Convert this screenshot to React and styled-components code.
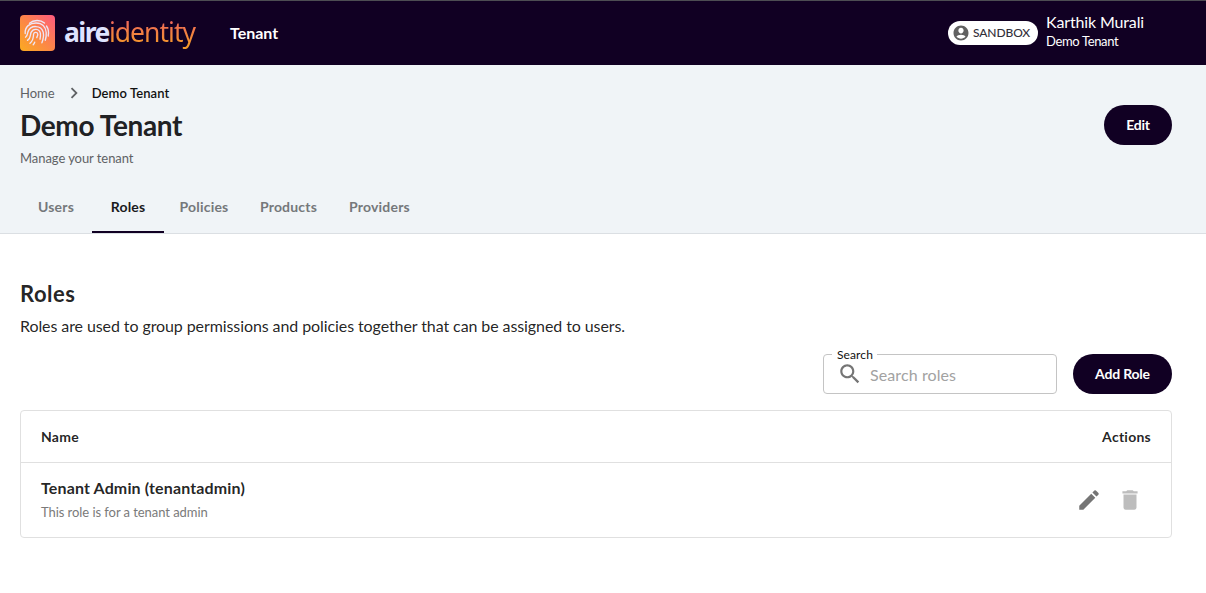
import React from "react";
import styled, { createGlobalStyle } from "styled-components";

const ink = "#110023";

const Global = createGlobalStyle`
  *, *::before, *::after { box-sizing: border-box; }
  body { margin: 0; background: #fff; font-family: Lato, "Liberation Sans", sans-serif; color: rgba(0, 0, 0, 0.87); }
  h1, h2, p { margin: 0; }
  button { font-family: inherit; border: 0; padding: 0; background: none; cursor: pointer; }
`;

const TopBar = styled.header`
  display: flex;
  align-items: center;
  height: 65px;
  padding: 0 62px 0 20px;
  background: ${ink};
  border-top: 1px solid #4d4d53;
  color: #fff;
`;
const Brand = styled.div`
  display: flex;
  align-items: center;
  width: 210px;
`;
const Wordmark = styled.div`
  display: flex;
  margin: -3px 0 0 9px;
  font: 700 26.5px/36px "Noto Sans", "Open Sans", sans-serif;
  letter-spacing: -1.5px;
  color: #dfe3ff;
`;
const WordmarkLight = styled.span`
  font-weight: 400;
  letter-spacing: -0.98px;
  padding-right: 2px;
  background: linear-gradient(to top, #f4982a 15%, #f0645e 85%);
  background-clip: text;
  color: transparent;
`;
const NavLink = styled.a`
  font-size: 16px;
  font-weight: 700;
  line-height: 20px;
`;
const Account = styled.div`
  display: flex;
  align-items: center;
  gap: 8px;
  margin-left: auto;
`;
const Chip = styled.span`
  display: flex;
  align-items: center;
  gap: 3px;
  width: 90px;
  height: 24px;
  padding-left: 4px;
  border-radius: 12px;
  background: #fff;
  color: #33303a;
  font-size: 12px;
  font-weight: 500;
  line-height: 22px;
  letter-spacing: -0.1px;
`;
const Person = styled.div`
  width: 98px;
  margin-top: -4px;
  white-space: nowrap;
`;
const PersonName = styled.div`
  font-size: 16px;
  line-height: 20px;
  letter-spacing: -0.14px;
`;
const PersonTenant = styled.div`
  font-size: 13px;
  line-height: 18px;
  letter-spacing: -0.35px;
`;

const PageHead = styled.section`
  height: 169px;
  padding: 18px 34px 0 20px;
  background: #f0f4f7;
  border-bottom: 1px solid #dbdfe3;
`;
const Crumbs = styled.nav`
  display: flex;
  align-items: center;
  height: 20px;
  font-size: 13px;
  color: #5f6265;
`;
const Current = styled.span`
  color: #111;
  font-weight: 600;
  letter-spacing: 0.1px;
`;
const HeadRow = styled.div`
  display: flex;
  justify-content: space-between;
  height: 78px;
`;
const Title = styled.h1`
  margin-top: 4px;
  font-size: 28px;
  font-weight: 700;
  line-height: 36px;
  color: #202124;
  letter-spacing: -0.35px;
`;
const Subtitle = styled.p`
  margin-top: 5px;
  font-size: 13px;
  line-height: 20px;
  letter-spacing: -0.06px;
  color: #5f6265;
`;
const PillButton = styled.button`
  width: ${(p) => p.$width}px;
  height: 40px;
  margin-top: ${(p) => p.$top || 0}px;
  padding-bottom: 2px;
  border-radius: 20px;
  background: ${ink};
  color: #fff;
  font-size: 14px;
  font-weight: 700;
  letter-spacing: -0.2px;
`;
const Tabs = styled.div`
  display: flex;
`;
const Tab = styled.button`
  height: 52px;
  width: ${(p) => p.$width}px;
  font-size: 14px;
  font-weight: 700;
  letter-spacing: 0.2px;
  color: ${(p) => (p.$active ? "#1a1a1c" : "#75787b")};
  border-bottom: 2px solid ${(p) => (p.$active ? ink : "transparent")};
`;

const Main = styled.main`
  padding: 46px 34px 0 20px;
`;
const SectionTitle = styled.h2`
  font-size: 22px;
  font-weight: 700;
  line-height: 28px;
  letter-spacing: 0.5px;
`;
const Lead = styled.p`
  margin: 7px 0 17px;
  font-size: 16px;
  line-height: 22px;
  letter-spacing: -0.09px;
`;
const Toolbar = styled.div`
  display: flex;
  justify-content: flex-end;
  gap: 16px;
  margin-bottom: 16px;
`;
const SearchField = styled.label`
  position: relative;
  display: flex;
  align-items: center;
  width: 234px;
  height: 40px;
  padding-left: 13px;
  border: 1px solid #c4c4c4;
  border-radius: 4px;
`;
const SearchLabel = styled.span`
  position: absolute;
  top: -8px;
  left: 8px;
  padding: 0 4px 0 5px;
  background: #fff;
  color: #111;
  font-size: 12px;
  line-height: 15px;
  letter-spacing: 0.1px;
`;
const SearchInput = styled.input`
  width: 170px;
  margin-left: 7px;
  padding: 1px 0 0;
  border: 0;
  outline: 0;
  font: 400 16px/22px Lato, sans-serif;
  letter-spacing: 0.1px;
  &::placeholder { color: #a2a2a2; opacity: 1; }
`;
const Table = styled.div`
  border: 1px solid #e0e0e0;
  border-radius: 4px;
`;
const HeaderRow = styled.div`
  display: flex;
  align-items: center;
  justify-content: space-between;
  height: 52px;
  padding: 0 20px 1px;
  border-bottom: 1px solid #e0e0e0;
  font-size: 14px;
  font-weight: 700;
  letter-spacing: 0.25px;
`;
const Row = styled.div`
  display: flex;
  align-items: center;
  justify-content: space-between;
  height: 74px;
  padding: 0 28px 0 20px;
`;
const RoleText = styled.div`
  margin-top: -2px;
`;
const RoleName = styled.div`
  font-size: 16px;
  font-weight: 700;
  line-height: 24px;
  letter-spacing: 0.14px;
`;
const RoleNote = styled.div`
  margin-top: 2px;
  font-size: 13px;
  line-height: 20px;
  letter-spacing: -0.06px;
  color: #7a7a7a;
`;
const Actions = styled.div`
  display: flex;
  gap: 15px;
`;
const Glyph = styled.svg`
  display: block;
  flex: none;
  fill: ${(p) => p.$color};
  margin: ${(p) => p.$margin || 0};
`;

const paths = {
  account: "M12 2C6.48 2 2 6.48 2 12s4.48 10 10 10 10-4.48 10-10S17.52 2 12 2zm0 3c1.93 0 3.5 1.57 3.5 3.7S13.93 12.500 12 12.500 8.500 10.900 8.500 8.700 10.070 5 12 5zm0 14.500c-2.300 0-4.400-.9-6-2.400.1-1.700 3.800-2.900 6-2.900s5.900 1.200 6 2.900c-1.600 1.500-3.700 2.400-6 2.400z",
  next: "M10 6 8.590 7.410 13.170 12l-4.580 4.590L10 18l6-6z",
  search: "M15.500 14h-.79l-.28-.27C15.410 12.590 16 11.110 16 9.500 16 5.910 13.090 3 9.500 3S3 5.910 3 9.500 5.910 16 9.500 16c1.610 0 3.090-.59 4.230-1.570l.27.28v.79l5 4.990L20.490 19l-4.990-5zm-6 0C7.010 14 5 11.990 5 9.500S7.010 5 9.500 5 14 7.010 14 9.500 11.990 14 9.500 14z",
  edit: "M3 17.250V21h3.750L17.810 9.940l-3.750-3.750L3 17.250zM20.710 7.040c.39-.39.39-1.020 0-1.410l-2.340-2.340a.9959.9959 0 0 0-1.410 0l-1.830 1.830 3.750 3.750 1.830-1.830z",
  trash: "M6 19c0 1.100.9 2 2 2h8c1.100 0 2-.9 2-2V7H6v12zM19 4h-3.500l-1-1h-5l-1 1H5v2h14V4z",
};

function Icon({ name, size = 24, color, margin }) {
  return (
    <Glyph viewBox="0 0 24 24" width={size} height={size} $color={color} $margin={margin}>
      <path d={paths[name]} />
    </Glyph>
  );
}

function LogoMark() {
  return (
    <svg width="35" height="36" viewBox="0 0 35 36">
      <defs>
        <linearGradient id="mark" x1="0" y1="1" x2="1" y2="0">
          <stop offset="0" stopColor="#fbab20" />
          <stop offset="0.5" stopColor="#fc8548" />
          <stop offset="1" stopColor="#ff5a80" />
        </linearGradient>
      </defs>
      <rect width="35" height="36" rx="4" fill="url(#mark)" />
      <g fill="none" stroke="#efe6f5" strokeWidth="1.350" strokeLinecap="round">
        <path d="M9.500 8.200C13.500 4.700 20.500 4.600 24.500 8" />
        <path d="M5.200 18.500C4.600 11.500 10 8 16 8c6.500 0 9.800 4.200 10.200 9.500.2 2.900-.1 5.300-.9 7.800" />
        <path d="M26.500 11c2.200 3.200 2.400 6.500 1.700 10" />
        <path d="M5.500 22.200c2.200-1.500 1.900-3.500 2.500-5.500 2.300-7 13.300-6.900 15.200.5.800 3.800-.1 7.500-1.300 10.600" />
        <path d="M7.500 25.400c3.700-2.600 2.500-5.600 3.600-8 2.300-4.600 8.400-3.600 9.300 1 .3 2.400 0 4-.4 5.800" />
        <path d="M10 28.300c3.700-3 3.200-6.500 3.600-9.100.5-2.600 4.200-2.200 4.200.2 0 1.300-.8 1.900-1 3.300" />
        <path d="M13.200 29.800c.8-.8 1.200-1.600 1.500-2.600" />
      </g>
    </svg>
  );
}

const tabs = [
  ["Users", 72],
  ["Roles", 72],
  ["Policies", 80],
  ["Products", 89],
  ["Providers", 93],
];

export default function App() {
  return (
    <>
      <Global />
      <TopBar>
        <Brand>
          <LogoMark />
          <Wordmark>aire<WordmarkLight>identity</WordmarkLight></Wordmark>
        </Brand>
        <NavLink>Tenant</NavLink>
        <Account>
          <Chip><Icon name="account" size={18} color="#616161" />SANDBOX</Chip>
          <Person>
            <PersonName>Karthik Murali</PersonName>
            <PersonTenant>Demo Tenant</PersonTenant>
          </Person>
        </Account>
      </TopBar>
      <PageHead>
        <Crumbs>
          <span>Home</span>
          <Icon name="next" size={22} color="#5f6265" margin="0 7px 0 8px" />
          <Current>Demo Tenant</Current>
        </Crumbs>
        <HeadRow>
          <div>
            <Title>Demo Tenant</Title>
            <Subtitle>Manage your tenant</Subtitle>
          </div>
          <PillButton $width={68} $top={2}>Edit</PillButton>
        </HeadRow>
        <Tabs>
          {tabs.map(([label, width]) => (
            <Tab key={label} $width={width} $active={label === "Roles"}>{label}</Tab>
          ))}
        </Tabs>
      </PageHead>
      <Main>
        <SectionTitle>Roles</SectionTitle>
        <Lead>Roles are used to group permissions and policies together that can be assigned to users.</Lead>
        <Toolbar>
          <SearchField>
            <SearchLabel>Search</SearchLabel>
            <Icon name="search" size={26} color="#757575" />
            <SearchInput placeholder="Search roles" />
          </SearchField>
          <PillButton $width={99}>Add Role</PillButton>
        </Toolbar>
        <Table>
          <HeaderRow><span>Name</span><span>Actions</span></HeaderRow>
          <Row>
            <RoleText>
              <RoleName>Tenant Admin (tenantadmin)</RoleName>
              <RoleNote>This role is for a tenant admin</RoleNote>
            </RoleText>
            <Actions>
              <Icon name="edit" size={26} color="#757575" />
              <Icon name="trash" size={26} color="#bdbdbd" />
            </Actions>
          </Row>
        </Table>
      </Main>
    </>
  );
}
